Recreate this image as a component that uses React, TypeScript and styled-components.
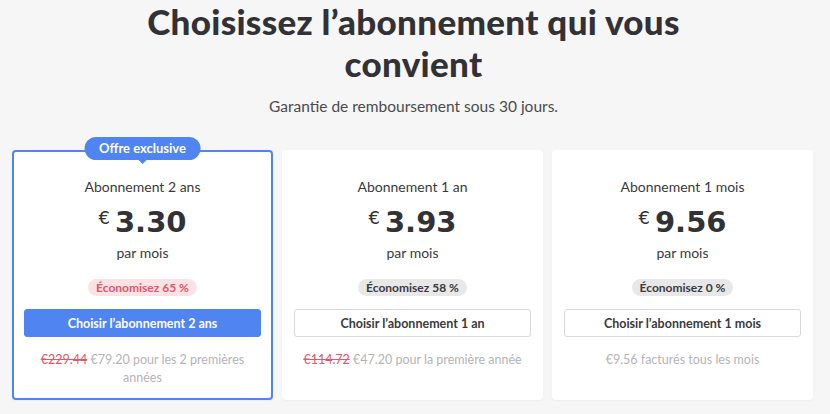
import React from "react";
import styled, { createGlobalStyle } from "styled-components";

const Global = createGlobalStyle`
  html, body { margin: 0; padding: 0; background: #f6f6f6; }
  body { font-family: Lato, "Open Sans", sans-serif; -webkit-font-smoothing: antialiased; }
  * { box-sizing: border-box; }
`;

const Page = styled.div`
  width: 830px;
  height: 414px;
  overflow: hidden;
  background: #f6f6f6;
  padding: 0 15px 0 12px;
  display: flex;
  flex-direction: column;
  align-items: center;
`;

const Title = styled.h1`
  margin: 0;
  max-width: 600px;
  font-size: 35px;
  line-height: 42px;
  font-weight: 900;
  color: #323236;
  text-align: center;
  letter-spacing: 0.3px;
`;

const Subtitle = styled.p`
  margin: 12px 0 0;
  font-size: 15.5px;
  line-height: 20px;
  color: #4a4a4e;
  text-align: center;
`;

const Grid = styled.div`
  margin-top: 34px;
  display: grid;
  grid-template-columns: repeat(3, 261px);
  gap: 9px;
  width: 100%;
`;

const Card = styled.div<{ $featured?: boolean }>`
  position: relative;
  height: 250px;
  background: #ffffff;
  border-radius: 4px;
  border: 2px solid ${(p) => (p.$featured ? "#4f84f1" : "transparent")};
  box-shadow: 0 1px 2px rgba(0, 0, 0, 0.04);
  padding: 25px 10px 10px;
  display: flex;
  flex-direction: column;
  align-items: center;
  color: #3a3a3e;
`;

const Badge = styled.div`
  position: absolute;
  top: -15px;
  left: 50%;
  transform: translateX(-50%);
  background: #4f84f1;
  color: #fff;
  font-size: 13px;
  font-weight: 700;
  line-height: 23px;
  height: 23px;
  padding: 0 15px;
  border-radius: 12px;
  white-space: nowrap;
  &::after {
    content: "";
    position: absolute;
    left: 50%;
    bottom: -4px;
    transform: translateX(-50%);
    border-left: 4px solid transparent;
    border-right: 4px solid transparent;
    border-top: 4px solid #4f84f1;
  }
`;

const PlanName = styled.div`
  font-size: 14px;
  line-height: 20px;
  color: #3a3a3e;
`;

const Price = styled.div`
  margin-top: 10px;
  height: 35px;
  display: flex;
  align-items: flex-start;
  color: #323236;
`;

const Currency = styled.span`
  font-family: "DejaVu Sans", sans-serif;
  font-size: 18px;
  line-height: 18px;
  margin-top: 2px;
  margin-right: 5px;
`;

const Amount = styled.span`
  font-family: "DejaVu Sans", sans-serif;
  font-size: 29px;
  line-height: 30px;
  font-weight: 700;
`;

const PerMonth = styled.div`
  margin-top: 1px;
  font-size: 14px;
  line-height: 20px;
  color: #3a3a3e;
`;

const Save = styled.div<{ $red?: boolean }>`
  margin-top: 16px;
  height: 17px;
  line-height: 17px;
  padding: 0 8px;
  border-radius: 9px;
  font-size: 12px;
  font-weight: 700;
  background: ${(p) => (p.$red ? "#fbe2e4" : "#e8e8e9")};
  color: ${(p) => (p.$red ? "#e0566a" : "#3a3a3e")};
`;

const Button = styled.button<{ $primary?: boolean }>`
  margin-top: 13px;
  width: 237px;
  height: 28px;
  border-radius: 3px;
  font-family: inherit;
  font-size: 12.5px;
  font-weight: 700;
  cursor: pointer;
  border: 1px solid ${(p) => (p.$primary ? "#4f84f1" : "#d9d9db")};
  background: ${(p) => (p.$primary ? "#4f84f1" : "#ffffff")};
  color: ${(p) => (p.$primary ? "#ffffff" : "#3a3a3e")};
`;

const Note = styled.div`
  margin-top: 14px;
  font-size: 12.5px;
  line-height: 18px;
  color: #b4b4b8;
  text-align: center;
  max-width: 220px;
`;

const Old = styled.s`
  color: #e0566a;
`;

type Plan = {
  name: string;
  amount: string;
  save: string;
  button: string;
  old?: string;
  note: string;
  featured?: boolean;
};

const plans: Plan[] = [
  {
    name: "Abonnement 2 ans",
    amount: "3.30",
    save: "Économisez 65 %",
    button: "Choisir l’abonnement 2 ans",
    old: "€229.44",
    note: "€79.20 pour les 2 premières années",
    featured: true,
  },
  {
    name: "Abonnement 1 an",
    amount: "3.93",
    save: "Économisez 58 %",
    button: "Choisir l’abonnement 1 an",
    old: "€114.72",
    note: "€47.20 pour la première année",
  },
  {
    name: "Abonnement 1 mois",
    amount: "9.56",
    save: "Économisez 0 %",
    button: "Choisir l’abonnement 1 mois",
    note: "€9.56 facturés tous les mois",
  },
];

export default function App() {
  return (
    <>
      <Global />
      <Page>
        <Title>Choisissez l’abonnement qui vous convient</Title>
        <Subtitle>Garantie de remboursement sous 30 jours.</Subtitle>
        <Grid>
          {plans.map((p) => (
            <Card key={p.name} $featured={p.featured}>
              {p.featured && <Badge>Offre exclusive</Badge>}
              <PlanName>{p.name}</PlanName>
              <Price>
                <Currency>€</Currency>
                <Amount>{p.amount}</Amount>
              </Price>
              <PerMonth>par mois</PerMonth>
              <Save $red={p.featured}>{p.save}</Save>
              <Button $primary={p.featured}>{p.button}</Button>
              <Note>
                {p.old && <Old>{p.old}</Old>}
                {p.old ? " " : ""}
                {p.note}
              </Note>
            </Card>
          ))}
        </Grid>
      </Page>
    </>
  );
}
